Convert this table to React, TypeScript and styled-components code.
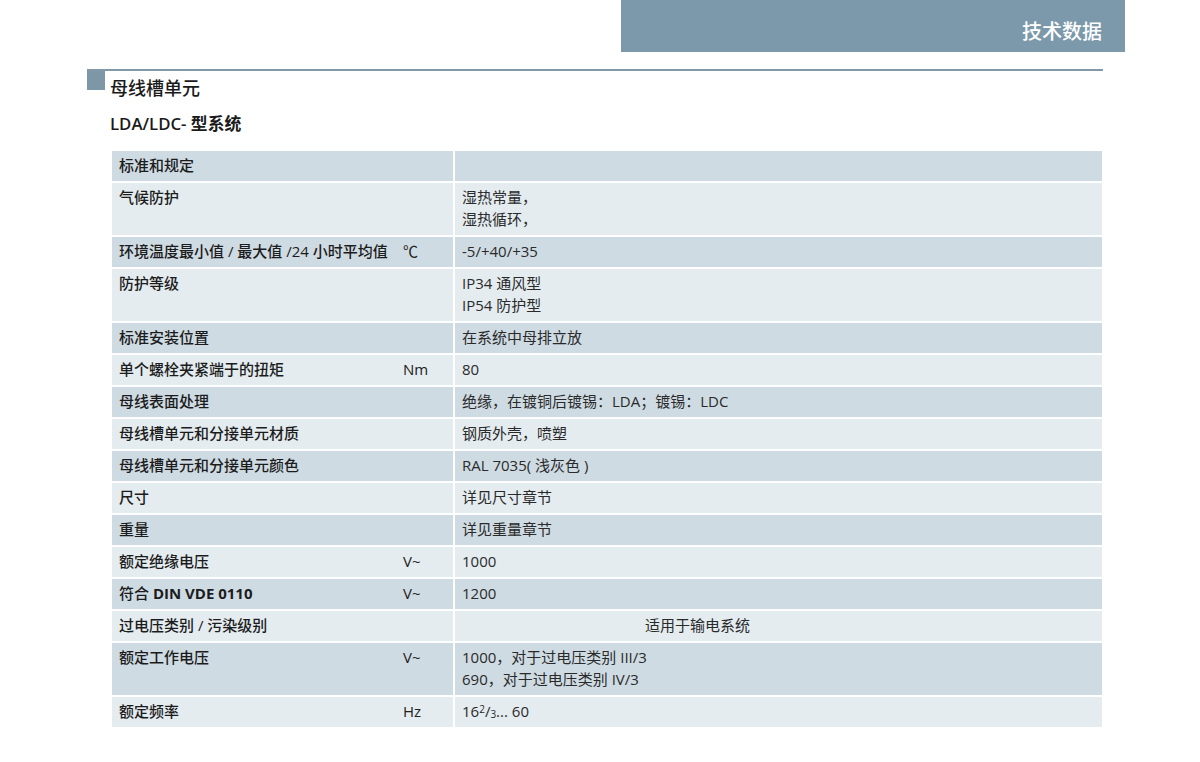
import React from "react";
import styled, { createGlobalStyle } from "styled-components";

const Global = createGlobalStyle`
  html, body { margin: 0; padding: 0; background: #ffffff; }
  body {
    width: 1200px;
    min-height: 762px;
    font-family: "Open Sans", "Noto Sans CJK SC", sans-serif;
    color: #1e1e1e;
  }
`;

const Page = styled.div`
  width: 1200px;
  height: 762px;
  overflow: hidden;
`;

const TopBar = styled.div`
  display: flex;
  justify-content: flex-end;
  padding-right: 75px;
`;

const Banner = styled.div`
  width: 504px;
  height: 52px;
  background: #7b99aa;
  color: #ffffff;
  display: flex;
  align-items: flex-end;
  justify-content: flex-end;
  box-sizing: border-box;
  padding: 0 23px 7px 0;
  font-family: "Noto Sans CJK SC", sans-serif;
  font-size: 20px;
  line-height: 28px;
  font-weight: 500;
`;

const SectionHead = styled.div`
  margin: 17px 0 0 87px;
  width: 1016px;
  border-top: 2px solid #8199a8;
  display: flex;
  align-items: flex-start;
`;

const Square = styled.div`
  width: 18px;
  height: 19px;
  background: #7d97a7;
  flex: none;
`;

const Title = styled.h1`
  margin: 0 0 0 5px;
  padding-top: 4px;
  font-family: "Noto Sans CJK SC", sans-serif;
  font-size: 18px;
  line-height: 24px;
  font-weight: 500;
  color: #1a1a1a;
`;

const Subtitle = styled.h2`
  margin: 14px 0 0 110px;
  font-family: "Open Sans", "Noto Sans CJK SC", sans-serif;
  font-size: 16.8px;
  line-height: 22px;
  font-weight: 600;
  color: #1a1a1a;
`;

const Table = styled.div`
  margin: 16px 0 0 112px;
  width: 990px;
  display: flex;
  flex-direction: column;
  gap: 2px;
`;

const Row = styled.div<{ $dark: boolean }>`
  display: grid;
  grid-template-columns: 341px 1fr;
  column-gap: 2px;
  & > div {
    background: ${(p) => (p.$dark ? "#cfdbe3" : "#e4ecf0")};
  }
`;

const LabelCell = styled.div`
  display: grid;
  grid-template-columns: 284px auto;
  align-content: start;
  padding: 3px 7px 5px;
  font-size: 15px;
  line-height: 22px;
  font-weight: 500;
  color: #1c1c1c;
`;

const Strong = styled.span`
  font-weight: 700;
`;

const Unit = styled.span`
  font-weight: 400;
  color: #222;
`;

const ValueCell = styled.div<{ $indent?: number }>`
  padding: 3px 7px 5px ${(p) => 7 + (p.$indent ?? 0)}px;
  font-size: 15px;
  line-height: 22px;
  font-weight: 400;
  color: #2a2a2a;
`;

const Line = styled.div``;

const Sup = styled.span`
  font-size: 10px;
  vertical-align: 4px;
  line-height: 0;
`;

const Sub = styled.span`
  font-size: 10px;
  vertical-align: -1px;
  line-height: 0;
`;

type RowData = {
  label: React.ReactNode;
  unit?: string;
  value: React.ReactNode[];
  indent?: number;
};

const rows: RowData[] = [
  { label: "标准和规定", value: [] },
  { label: "气候防护", value: ["湿热常量，", "湿热循环，"] },
  { label: "环境温度最小值 / 最大值 /24 小时平均值", unit: "℃", value: ["-5/+40/+35"] },
  { label: "防护等级", value: ["IP34 通风型", "IP54 防护型"] },
  { label: "标准安装位置", value: ["在系统中母排立放"] },
  { label: "单个螺栓夹紧端于的扭矩", unit: "Nm", value: ["80"] },
  { label: "母线表面处理", value: ["绝缘，在镀铜后镀锡：LDA；镀锡：LDC"] },
  { label: "母线槽单元和分接单元材质", value: ["钢质外壳，喷塑"] },
  { label: "母线槽单元和分接单元颜色", value: ["RAL 7035( 浅灰色 )"] },
  { label: "尺寸", value: ["详见尺寸章节"] },
  { label: "重量", value: ["详见重量章节"] },
  { label: "额定绝缘电压", unit: "V~", value: ["1000"] },
  {
    label: (
      <>
        符合 <Strong>DIN VDE 0110</Strong>
      </>
    ),
    unit: "V~",
    value: ["1200"],
  },
  { label: "过电压类别 / 污染级别", value: ["适用于输电系统"], indent: 183 },
  {
    label: "额定工作电压",
    unit: "V~",
    value: ["1000，对于过电压类别 III/3", "690，对于过电压类别 IV/3"],
  },
  {
    label: "额定频率",
    unit: "Hz",
    value: [
      <>
        16<Sup>2</Sup>/<Sub>3</Sub>... 60
      </>,
    ],
  },
];

export default function App() {
  return (
    <Page>
      <Global />
      <TopBar>
        <Banner>技术数据</Banner>
      </TopBar>
      <SectionHead>
        <Square />
        <Title>母线槽单元</Title>
      </SectionHead>
      <Subtitle>LDA/LDC- 型系统</Subtitle>
      <Table>
        {rows.map((r, i) => (
          <Row key={i} $dark={i % 2 === 0}>
            <LabelCell>
              <span>{r.label}</span>
              {r.unit ? <Unit>{r.unit}</Unit> : <span />}
            </LabelCell>
            <ValueCell $indent={r.indent}>
              {r.value.length === 0 ? (
                <Line>&nbsp;</Line>
              ) : (
                r.value.map((v, j) => <Line key={j}>{v}</Line>)
              )}
            </ValueCell>
          </Row>
        ))}
      </Table>
    </Page>
  );
}
